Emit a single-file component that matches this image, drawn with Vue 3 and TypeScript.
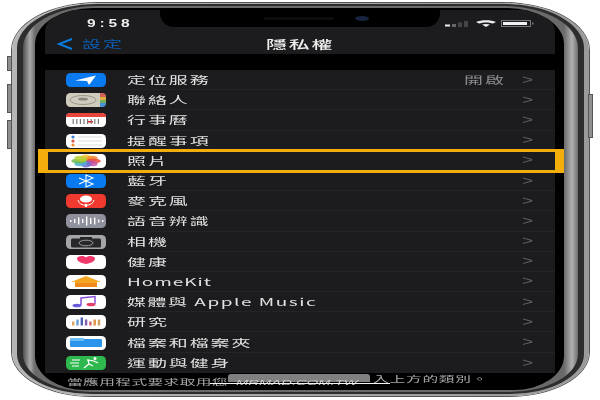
<script setup lang="ts">
type Row = { label: string; icon: string; value?: string };

const rows: Row[] = [
  { label: "定位服務", icon: "location", value: "開啟" },
  { label: "聯絡人", icon: "contacts" },
  { label: "行事曆", icon: "calendar" },
  { label: "提醒事項", icon: "reminders" },
  { label: "照片", icon: "photos" },
  { label: "藍牙", icon: "bluetooth" },
  { label: "麥克風", icon: "mic" },
  { label: "語音辨識", icon: "speech" },
  { label: "相機", icon: "camera" },
  { label: "健康", icon: "health" },
  { label: "HomeKit", icon: "home" },
  { label: "媒體與 Apple Music", icon: "music" },
  { label: "研究", icon: "research" },
  { label: "檔案和檔案夾", icon: "files" },
  { label: "運動與健身", icon: "fitness" },
];

const petals = ["#f2c230", "#f08a2c", "#e8483c", "#c452a8", "#6a6fd0", "#4fb0d8", "#6cc04a", "#b8d030"];
const researchBars = [
  ["#e0a060", 4], ["#6aa0d8", 6], ["#5060b0", 8], ["#8060b0", 6],
  ["#d06070", 4], ["#e09040", 6], ["#d0a060", 6],
] as const;
</script>

<template>
  <div class="page">
    <i class="btn btn-mute" />
    <i class="btn btn-up" />
    <i class="btn btn-down" />
    <i class="btn btn-power" />
    <div class="phone">
      <div class="rim">
        <div class="steel">
          <div class="glass">
            <div class="notch"><i class="speaker" /><i class="lens" /></div>
            <div class="panel">
              <div class="status">
                <span class="time">9:58</span>
                <div class="indicators">
                  <svg width="26" height="6" viewBox="0 0 26 6">
                    <rect x="0" y="3.5" width="5" height="2" fill="#eee" />
                    <rect x="7" y="3" width="4" height="3" fill="#666" />
                    <rect x="13" y="1.5" width="4" height="4.5" fill="#444" />
                    <rect x="19" y="0" width="4" height="6" fill="#444" />
                  </svg>
                  <svg width="20" height="7" viewBox="0 0 20 7">
                    <path d="M0 2C5-.5 15-.5 20 2L17 3.5C13 2 7 2 3 3.5Z" fill="#eee" />
                    <path d="M6 4.5C8 3.8 12 3.8 14 4.5L10 7Z" fill="#eee" />
                  </svg>
                  <svg width="34" height="7" viewBox="0 0 34 7">
                    <rect x=".5" y=".5" width="29" height="6" fill="none" stroke="#777" />
                    <rect x="2" y="2" width="24" height="3" fill="#f2f2f2" />
                    <rect x="31" y="2.5" width="1.5" height="2" fill="#777" />
                  </svg>
                </div>
              </div>
              <header class="nav">
                <div class="back">
                  <svg width="16" height="12" viewBox="0 0 16 12">
                    <path d="M15 1 2 6l13 5" fill="none" stroke="#0a7ce0" stroke-width="2" />
                  </svg>
                  <span class="stretch back-text">設定</span>
                </div>
                <span class="stretch title">隱私權</span>
              </header>
              <div class="gap" />
              <ul class="list">
                <li v-for="row in rows" :key="row.label" class="row">
                  <svg class="icon" width="40" height="14" viewBox="0 0 40 14">
                    <template v-if="row.icon === 'location'">
                      <rect width="40" height="14" rx="4.5" fill="#0a7af0" />
                      <path d="M9 7.5 30 2.5 23 12l-2-4z" fill="#fff" />
                    </template>
                    <template v-else-if="row.icon === 'contacts'">
                      <rect width="40" height="14" rx="4.5" fill="#cfcbbd" />
                      <path d="M34 0h2a4 4 0 0 1 4 4h-6z" fill="#d0605a" />
                      <rect x="34" y="4" width="6" height="3" fill="#e0b040" />
                      <rect x="34" y="7" width="6" height="3" fill="#70b060" />
                      <path d="M34 10h6a4 4 0 0 1-4 4h-2z" fill="#4a90d8" />
                      <ellipse cx="17" cy="7" rx="13" ry="4.5" fill="none" stroke="#9a978c" />
                      <ellipse cx="17" cy="6" rx="5" ry="1.6" fill="#8a877c" />
                    </template>
                    <template v-else-if="row.icon === 'calendar'">
                      <rect width="40" height="14" rx="4.5" fill="#fff" />
                      <path d="M0 4a4 4 0 0 1 4-4h32a4 4 0 0 1 4 4z" fill="#e8453c" />
                      <g fill="#777">
                        <rect v-for="n in 8" :key="n" :x="3 + n * 3.6" y="6" width="1.2" height="5" />
                      </g>
                      <rect x="22" y="8" width="5" height="1.5" fill="#d03030" />
                    </template>
                    <template v-else-if="row.icon === 'reminders'">
                      <rect width="40" height="14" rx="4.5" fill="#fff" />
                      <circle cx="7" cy="3" r="1.6" fill="#3a80d8" />
                      <circle cx="7" cy="7" r="1.6" fill="#e0503c" />
                      <circle cx="7" cy="11" r="1.6" fill="#f09030" />
                      <rect x="12" y="2.5" width="24" height="1" fill="#ddd" />
                      <rect x="12" y="6.5" width="24" height="1" fill="#ddd" />
                      <rect x="12" y="10.5" width="24" height="1" fill="#ddd" />
                    </template>
                    <template v-else-if="row.icon === 'photos'">
                      <rect width="40" height="14" rx="4.5" fill="#fff" />
                      <g transform="translate(20 7) scale(2.3 1)">
                        <ellipse
                          v-for="(c, i) in petals"
                          :key="c"
                          cx="0"
                          cy="-3.2"
                          rx="2.4"
                          ry="3.2"
                          :fill="c"
                          opacity=".85"
                          :transform="`rotate(${i * 45})`"
                        />
                      </g>
                    </template>
                    <template v-else-if="row.icon === 'bluetooth'">
                      <rect width="40" height="14" rx="4.5" fill="#0a7af0" />
                      <path d="M13 4 27 10 20 13V1l7 3-14 6" fill="none" stroke="#fff" stroke-width="1.1" />
                    </template>
                    <template v-else-if="row.icon === 'mic'">
                      <rect width="40" height="14" rx="4.5" fill="#f0392f" />
                      <ellipse cx="20" cy="5" rx="6" ry="3.6" fill="#fff" />
                      <path d="M12 6c1 7 15 7 16 0" fill="none" stroke="#fff" />
                      <rect x="19" y="10" width="2" height="3" fill="#fff" />
                    </template>
                    <template v-else-if="row.icon === 'speech'">
                      <rect width="40" height="14" rx="4.5" fill="#8f929c" />
                      <g fill="#fff">
                        <rect x="4" y="6" width="1.4" height="2" />
                        <rect x="8" y="5" width="1.4" height="4" />
                        <rect x="12" y="3.5" width="1.4" height="7" />
                        <rect x="16" y="5" width="1.4" height="4" />
                        <rect x="20" y="2.5" width="1.4" height="9" />
                        <rect x="24" y="4" width="1.4" height="6" />
                        <rect x="28" y="3.5" width="1.4" height="7" />
                        <rect x="32" y="5.5" width="1.4" height="3" />
                        <rect x="36" y="6" width="1.4" height="2" />
                      </g>
                    </template>
                    <template v-else-if="row.icon === 'camera'">
                      <rect width="40" height="14" rx="4.5" fill="#a5a5a8" />
                      <rect x="5" y="3.5" width="30" height="9" rx="1.5" fill="#27272a" />
                      <rect x="14" y="2" width="12" height="3" fill="#27272a" />
                      <ellipse cx="20" cy="8" rx="7" ry="2.8" fill="none" stroke="#9a9a9a" />
                    </template>
                    <template v-else-if="row.icon === 'health'">
                      <rect width="40" height="14" rx="4.5" fill="#fff" />
                      <path d="M20 9C14 8 11 6 11 3.5 11 1 17 0 20 2.5 23 0 29 1 29 3.5 29 6 26 8 20 9Z" fill="#f0386a" />
                    </template>
                    <template v-else-if="row.icon === 'home'">
                      <rect width="40" height="14" rx="4.5" fill="#fff" />
                      <path d="M5 7 20 1l15 6h-4v5H9V7z" fill="#f5a623" />
                      <rect x="9" y="8" width="22" height="4" fill="#f08a1c" />
                    </template>
                    <template v-else-if="row.icon === 'music'">
                      <rect width="40" height="14" rx="4.5" fill="#fff" />
                      <path d="M15 10V3L29 1.5V9" fill="none" stroke="#8a50d8" stroke-width="1.5" />
                      <ellipse cx="11" cy="10.5" rx="4.5" ry="1.8" fill="#6a5ad8" />
                      <ellipse cx="25" cy="9.5" rx="4.5" ry="1.8" fill="#e0406a" />
                    </template>
                    <template v-else-if="row.icon === 'research'">
                      <rect width="40" height="14" rx="4.5" fill="#fff" />
                      <rect
                        v-for="(b, i) in researchBars"
                        :key="i"
                        :x="6 + i * 4.3"
                        :y="10.5 - b[1]"
                        width="2.4"
                        :height="b[1]"
                        :fill="b[0]"
                      />
                    </template>
                    <template v-else-if="row.icon === 'files'">
                      <rect width="40" height="14" rx="4.5" fill="#fff" />
                      <rect x="4" y="3" width="32" height="8" rx="1" fill="#2a95ea" />
                      <rect x="4" y="2" width="14" height="3" rx="1" fill="#6abcf5" />
                    </template>
                    <template v-else>
                      <rect width="40" height="14" rx="4.5" fill="#2fb84e" />
                      <g fill="none" stroke="#fff" stroke-width="1.2">
                        <path d="M6 4h8M4 7h9M6 10h7" />
                        <path d="M18 12l5-4 4 2M23 8l-1-4 6 1 4 2M21 4h3" />
                      </g>
                      <circle cx="29" cy="2.5" r="1.5" fill="#fff" />
                    </template>
                  </svg>
                  <div class="row-main">
                    <span class="stretch label" :class="{ 'label-home': row.icon === 'home', 'label-music': row.icon === 'music' }">{{ row.label }}</span>
                    <span v-if="row.value" class="stretch value">{{ row.value }}</span>
                    <span class="chev">&gt;</span>
                  </div>
                  <i v-if="row.icon === 'photos'" class="highlight" />
                </li>
              </ul>
            </div>
            <div class="footer">
              <div class="foot-left"><span class="stretch foot-text">當應用程式要求取用您</span></div>
              <div class="mark"><span class="mark-text">MRMAD.COM.TW</span></div>
              <span class="stretch foot-text foot-right">入上方的類別。</span>
            </div>
            <i class="home-bar" />
          </div>
        </div>
      </div>
    </div>
  </div>
</template>

<style scoped>
.page {
  position: relative;
  width: 600px;
  height: 400px;
  padding: 3px 11px 4px 12px;
  box-sizing: border-box;
  background: #fff;
  overflow: hidden;
  font-family: "Noto Sans CJK TC", "Liberation Sans", sans-serif;
}
.btn {
  position: absolute;
  background: #8f8f8f;
  border: 1px solid #555;
  box-sizing: border-box;
}
.btn-mute { left: 7px; top: 56px; width: 5px; height: 15px; }
.btn-up { left: 7px; top: 84px; width: 5px; height: 29px; }
.btn-down { left: 7px; top: 120px; width: 5px; height: 29px; }
.btn-power { left: 588px; top: 94px; width: 5px; height: 44px; }

.phone {
  height: 100%;
  box-sizing: border-box;
  padding: 1px 5px 2px;
  border-radius: 86px 86px 80px 80px / 47px 47px 44px 44px;
  background: linear-gradient(90deg, #b5b5b5, #9a9a9a);
  box-shadow: 0 0 0 1px #555;
}
.rim {
  height: 100%;
  box-sizing: border-box;
  padding: 2px 6px 2px;
  border-radius: 80px 80px 74px 74px / 44px 44px 40px 40px;
  background: #2d2d2d;
}
.steel {
  height: 100%;
  box-sizing: border-box;
  padding: 2px 14px 2px 12px;
  border-radius: 74px 74px 68px 68px / 42px 42px 38px 38px;
  background: linear-gradient(90deg, #505050, #a8a8a8 7px, #6a6a6a 12px, #6a6a6a calc(100% - 14px), #b0b0b0 calc(100% - 6px), #6e6e6e);
}
.glass {
  position: relative;
  height: 100%;
  box-sizing: border-box;
  padding: 2px 9px 0 10px;
  border-radius: 58px 58px 50px 50px / 36px 36px 34px 34px;
  background: #000;
  overflow: hidden;
}
.notch {
  position: absolute;
  left: 125px;
  top: 0;
  width: 280px;
  height: 19px;
  box-sizing: border-box;
  padding: 8px 0 0 104px;
  display: flex;
  align-items: flex-start;
  gap: 21px;
  background: #000;
  border-radius: 0 0 14px 14px;
}
.speaker {
  width: 70px;
  height: 3px;
  margin-top: 1px;
  border-radius: 2px;
  background: #0d0d0d;
}
.lens {
  width: 14px;
  height: 5px;
  border-radius: 50%;
  background: #16243f;
}
.panel {
  border-radius: 30px 30px 0 0 / 22px 22px 0 0;
  background: #1c1c1e;
}
.status {
  height: 23px;
  display: flex;
  align-items: center;
  justify-content: space-between;
  padding: 0 20px 0 42px;
}
.time {
  color: #eee;
  font: 700 10px "Liberation Sans", sans-serif;
  letter-spacing: 2.5px;
  transform-origin: left center;
  transform: translateY(2px) scaleX(1.55);
  filter: blur(0.3px);
}
.indicators {
  display: flex;
  align-items: center;
  gap: 5px;
  transform: translateY(2px);
}
.nav {
  position: relative;
  height: 21px;
  display: flex;
  align-items: center;
  padding-left: 221px;
}
.back {
  position: absolute;
  left: 12px;
  top: 0;
  bottom: 0;
  display: flex;
  align-items: center;
  gap: 9px;
}
.stretch {
  display: inline-block;
  white-space: nowrap;
  transform-origin: left center;
  transform: scaleX(1.9);
  filter: blur(0.35px);
  letter-spacing: 1px;
}
.back-text {
  color: #0b5fb8;
  font-size: 10px;
  line-height: 12px;
}
.title {
  color: #eee;
  font-size: 11px;
  font-weight: 500;
}
.gap {
  height: 16px;
  background: #000;
}
.list {
  margin: 0;
  padding: 0;
  list-style: none;
}
.row {
  position: relative;
  height: 20.2px;
  display: flex;
  align-items: center;
  padding-left: 21px;
}
.icon {
  flex: none;
  filter: blur(0.5px);
}
.row-main {
  flex: 1;
  align-self: stretch;
  display: flex;
  align-items: center;
  margin-left: 21px;
  padding-right: 24px;
  border-bottom: 1px solid #242426;
  box-sizing: border-box;
}
.row:last-child .row-main { border-bottom: 0; }
.label {
  color: #e2e2e2;
  font-size: 10px;
}
.label-home { letter-spacing: 0.5px; }
.label-music { letter-spacing: 0.8px; }
.value {
  position: absolute;
  right: 67px;
  width: 24px;
  color: #8a8a8e;
  font-size: 10px;
}
.chev {
  margin-left: auto;
  color: #5e5e62;
  font: 12px "Liberation Sans", sans-serif;
  transform: scaleX(1.6);
  filter: blur(0.3px);
}
.highlight {
  position: absolute;
  left: -7px;
  right: -10px;
  top: -2px;
  bottom: -2px;
  border: solid #f3ae0c;
  border-width: 3px 10px;
}
.footer {
  display: flex;
  align-items: flex-start;
  height: 15px;
  padding-left: 22px;
  line-height: 10px;
}
.foot-left {
  flex: none;
  width: 161px;
}
.foot-text {
  color: #a8a8a8;
  font-size: 8.5px;
  letter-spacing: 0.2px;
  transform: scaleX(1.85);
}
.foot-right {
  margin-left: 3px;
  letter-spacing: 0.4px;
}
.mark {
  flex: none;
  width: 142px;
  height: 8px;
  margin-top: 1px;
  padding-left: 8px;
  box-sizing: border-box;
  border-radius: 3px 3px 0 0;
  background: #808080;
  line-height: 8px;
}
.mark-text {
  display: inline-block;
  color: #c8c8c8;
  font: italic 400 8px/8px "Liberation Sans", sans-serif;
  transform-origin: left center;
  transform: scaleX(1.85);
  filter: blur(0.3px);
}
.home-bar {
  position: absolute;
  left: 175px;
  bottom: 6px;
  width: 180px;
  height: 1.5px;
  background: #f4f4f4;
}
</style>
